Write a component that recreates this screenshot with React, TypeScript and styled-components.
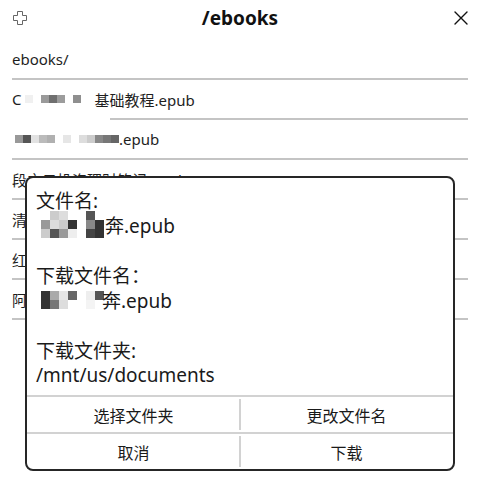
import React from "react";
import styled, { createGlobalStyle } from "styled-components";

const Global = createGlobalStyle`
  html, body { margin: 0; padding: 0; background: #fff; }
  body { font-family: "Noto Sans", "Noto Sans CJK SC", sans-serif; color: #1a1a1a; }
  * { box-sizing: border-box; }
`;

const Screen = styled.div`
  position: relative;
  width: 480px;
  height: 479px;
  overflow: hidden;
  background: #fff;
`;

const Header = styled.header`
  height: 40px;
  display: grid;
  grid-template-columns: 1fr auto 1fr;
  align-items: center;
  padding: 0 12px 4px;
`;

const Title = styled.h1`
  margin: 0;
  font-size: 19px;
  font-weight: 700;
  color: #111;
  line-height: 1;
`;

const IconSlot = styled.span<{ $end?: boolean }>`
  display: flex;
  justify-self: ${(p) => (p.$end ? "end" : "start")};
`;

const List = styled.div`
  padding: 0 12px;
`;

const Row = styled.div<{ $inset?: number }>`
  height: 40px;
  display: flex;
  align-items: center;
  padding-bottom: 2px;
  font-size: 15px;
  color: #1e1e1e;
  white-space: nowrap;
  overflow: hidden;
  background: linear-gradient(#c4c4c4, #c4c4c4) no-repeat;
  background-position: ${(p) => p.$inset ?? 0}px 100%;
  background-size: calc(100% - ${(p) => p.$inset ?? 0}px) 2px;
`;

const MosaicGrid = styled.span<{ $cols: number; $size: number; $gapL: number; $gapR: number }>`
  display: inline-grid;
  grid-template-columns: repeat(${(p) => p.$cols}, ${(p) => p.$size}px);
  grid-auto-rows: ${(p) => p.$size}px;
  margin: 0 ${(p) => p.$gapR}px 0 ${(p) => p.$gapL}px;
  flex: none;
`;

const Cell = styled.span<{ $c: string }>`
  background: ${(p) => p.$c};
`;

const Mosaic: React.FC<{ rows: string[][]; size: number; gapL?: number; gapR?: number }> = ({
  rows,
  size,
  gapL = 0,
  gapR = 0,
}) => (
  <MosaicGrid $cols={rows[0].length} $size={size} $gapL={gapL} $gapR={gapR}>
    {rows.flat().map((c, i) => (
      <Cell key={i} $c={c} />
    ))}
  </MosaicGrid>
);

const Dialog = styled.div`
  position: absolute;
  left: 25px;
  top: 176px;
  width: 430px;
  background: #fff;
  border: 2px solid #262626;
  border-radius: 8px;
  display: flex;
  flex-direction: column;
  overflow: hidden;
`;

const DialogBody = styled.div`
  padding: 9px 0 8px 9px;
  display: flex;
  flex-direction: column;
  gap: 25px;
`;

const Field = styled.div`
  display: flex;
  flex-direction: column;
`;

const Line = styled.div`
  height: 25px;
  display: flex;
  align-items: center;
  font-size: 19px;
  color: #1a1a1a;
  white-space: nowrap;
`;

const ActionRow = styled.div`
  display: grid;
  grid-template-columns: 1fr 1fr;
  height: 37px;
  border-top: 2px solid #d2d2d2;
`;

const Action = styled.button<{ $divider?: boolean }>`
  position: relative;
  border: 0;
  background: transparent;
  padding: 0;
  font-family: inherit;
  font-size: 16px;
  color: #1a1a1a;
  display: flex;
  align-items: center;
  justify-content: center;
  &::before {
    content: "";
    display: ${(p) => (p.$divider ? "block" : "none")};
    position: absolute;
    left: -1px;
    top: 2px;
    bottom: 2px;
    width: 2px;
    background: #d2d2d2;
  }
`;

const PlusIcon = () => (
  <svg width="16" height="16" viewBox="0 0 16 16">
    <polygon
      points="5.5,1.5 10.5,1.5 10.5,5.5 14.5,5.5 14.5,10.5 10.5,10.5 10.5,14.5 5.5,14.5 5.5,10.5 1.5,10.5 1.5,5.5 5.5,5.5"
      fill="none"
      stroke="#666"
      strokeWidth="1"
      strokeLinejoin="round"
    />
  </svg>
);

const CloseIcon = () => (
  <svg width="14" height="14" viewBox="0 0 14 14">
    <path d="M1 1 L13 13 M13 1 L1 13" stroke="#111" strokeWidth="1.4" strokeLinecap="round" />
  </svg>
);

const w = "#fff";

export default function App() {
  return (
    <Screen>
      <Global />
      <Header>
        <IconSlot>
          <PlusIcon />
        </IconSlot>
        <Title>/ebooks</Title>
        <IconSlot $end>
          <CloseIcon />
        </IconSlot>
      </Header>
      <List>
        <Row>ebooks/</Row>
        <Row $inset={98}>
          C
          <Mosaic
            size={8}
            gapL={4}
            gapR={13}
            rows={[["#f0f0f0", w, "#9a9a9a", "#6f6f6f", "#9c9c9c", w, "#8f8f8f"]]}
          />
          基础教程.epub
        </Row>
        <Row>
          <Mosaic
            size={8}
            gapL={3}
            rows={[
              ["#999", "#555", "#e2e2e2", "#bbb", "#b0b0b0", w, "#e6e6e6", w, "#ddd", "#ccc", "#888", "#777", "#666"],
            ]}
          />
          .epub
        </Row>
        <Row>段之云投资理财笔记.epub</Row>
        <Row>清单.epub</Row>
        <Row>红楼.epub</Row>
        <Row>阿Q.epub</Row>
      </List>

      <Dialog>
        <DialogBody>
          <Field>
            <Line>文件名:</Line>
            <Line>
              <Mosaic
                size={9}
                gapL={5}
                gapR={1}
                rows={[
                  [w, "#ccc", "#ddd", w, w, "#555", w],
                  ["#999", "#ddd", "#ccc", "#333", w, "#888", "#333"],
                  ["#ccc", "#555", "#999", "#eee", w, "#444", "#333"],
                ]}
              />
              奔.epub
            </Line>
          </Field>
          <Field>
            <Line>下载文件名：</Line>
            <Line>
              <Mosaic
                size={9}
                gapL={5}
                gapR={-2}
                rows={[
                  ["#333", "#aaa", "#e6e6e6", "#666", w, "#eee", "#555"],
                  ["#333", "#777", "#ddd", w, w, "#f4f4f4", w],
                ]}
              />
              奔.epub
            </Line>
          </Field>
          <Field>
            <Line>下载文件夹:</Line>
            <Line>/mnt/us/documents</Line>
          </Field>
        </DialogBody>
        <ActionRow>
          <Action>选择文件夹</Action>
          <Action $divider>更改文件名</Action>
        </ActionRow>
        <ActionRow>
          <Action>取消</Action>
          <Action $divider>下载</Action>
        </ActionRow>
      </Dialog>
    </Screen>
  );
}
